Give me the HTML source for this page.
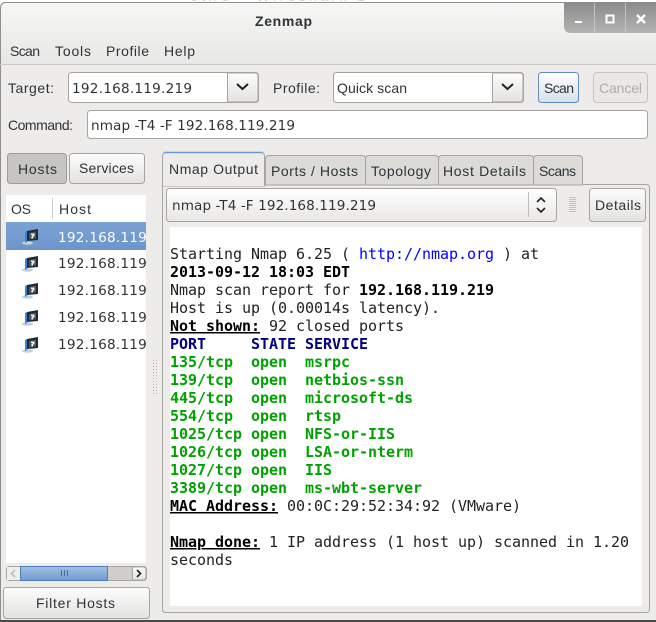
<!DOCTYPE html>
<html><head><meta charset="utf-8"><title>Zenmap</title>
<style>
html,body{margin:0;padding:0;background:#fff;width:656px;height:622px;overflow:hidden}
svg{display:block}
text{font-family:"Liberation Sans",sans-serif;font-size:14px;fill:#2e3436}
.d{font-family:"DejaVu Sans",sans-serif;font-size:13.6px}
.m{font-family:"DejaVu Sans Mono","Liberation Mono",monospace;font-size:15px;fill:#222;white-space:pre;letter-spacing:-0.03px}
.b{font-weight:bold;fill:#000}
.n{font-weight:bold;fill:#000080}
.g{font-weight:bold;fill:#00a200}
.u{text-decoration:underline}
.btn{fill:url(#bg);stroke:#a5a4a0}
.chev{fill:none;stroke:#222;stroke-width:2}
</style></head><body>
<svg xmlns="http://www.w3.org/2000/svg" width="656" height="622" viewBox="0 0 656 622">
<defs>
<linearGradient id="tb" x1="0" y1="0" x2="0" y2="1"><stop offset="0" stop-color="#f7f7f6"/><stop offset="1" stop-color="#e7e7e5"/></linearGradient>
<linearGradient id="bg" x1="0" y1="0" x2="0" y2="1"><stop offset="0" stop-color="#fdfdfd"/><stop offset="1" stop-color="#e3e2e0"/></linearGradient>
<linearGradient id="wb" x1="0" y1="0" x2="0" y2="1"><stop offset="0" stop-color="#8b8b8b"/><stop offset="1" stop-color="#b4b4b3"/></linearGradient>
<linearGradient id="sc" x1="0" y1="0" x2="0" y2="1"><stop offset="0" stop-color="#ffffff"/><stop offset="1" stop-color="#d5dfec"/></linearGradient>
<linearGradient id="th" x1="0" y1="0" x2="0" y2="1"><stop offset="0" stop-color="#a4c0e4"/><stop offset="1" stop-color="#6f9ad0"/></linearGradient>
<linearGradient id="sel" x1="0" y1="0" x2="0" y2="1"><stop offset="0" stop-color="#7ba2d4"/><stop offset="1" stop-color="#6c95ca"/></linearGradient>
<linearGradient id="cb" x1="0" y1="0" x2="0" y2="1"><stop offset="0" stop-color="#ffffff"/><stop offset="1" stop-color="#e8e7e5"/></linearGradient>
<g id="ico">
<ellipse cx="5.500" cy="14" rx="5.500" ry="1.800" fill="#c3d0de"/>
<path d="M3 3L5 2V13L3 14Z" fill="#3a86d6"/>
<path d="M5 2L16 0V11L5 12Z" fill="#1f2a36"/>
<path d="M7 4L14 2.500V9.500L7 10.500Z" fill="#4c565f"/>
<path d="M9 4.500h3.500v2.500l-1.500 1v1.500H9.500V7l1.500-1H9z" fill="#f2f2f2"/>
</g>
</defs>

<rect width="656" height="622" fill="#fff"/>
<text x="190" y="1" style="fill:#d5d5d5" textLength="175" lengthAdjust="spacing">ethO - Wireshark 2</text>
<path d="M0 622V8Q0 2 6 2H656V622Z" fill="#edecea"/>
<path d="M1 64V8Q1 3 6 3H656V64Z" fill="url(#tb)"/>
<path d="M.5 622V8Q.5 2.500 6 2.500H656" fill="none" stroke="#8e8e8c"/>
<rect x="0" y="64" width="656" height="1" fill="#c9c8c5"/>
<rect x="0" y="620" width="656" height="2" fill="#4a4a4a"/>

<!-- window buttons -->
<path d="M564 3H656V33H571Q564 33 564 26Z" fill="url(#wb)"/>
<rect x="594" y="3" width="1" height="30" fill="#c4c4c4"/>
<rect x="625" y="3" width="1" height="30" fill="#c4c4c4"/>
<rect x="575" y="21" width="7" height="2" fill="#fff"/>
<rect x="606.500" y="15.500" width="7" height="7" fill="none" stroke="#fff" stroke-width="2"/>
<path d="M637 15L645 23M645 15L637 23" stroke="#fff" stroke-width="2.400" fill="none"/>

<text x="255" y="26" style="font-weight:bold" textLength="57" lengthAdjust="spacing">Zenmap</text>

<text x="10" y="56" textLength="30" lengthAdjust="spacing">Scan</text>
<text x="55" y="56" textLength="36" lengthAdjust="spacing">Tools</text>
<text x="106" y="56" textLength="43" lengthAdjust="spacing">Profile</text>
<text x="164" y="56" textLength="31" lengthAdjust="spacing">Help</text>

<!-- target row -->
<text x="8" y="93" textLength="46" lengthAdjust="spacing">Target:</text>
<rect x="68.500" y="72.500" width="190" height="30" rx="3" fill="#fff" stroke="#a5a4a0"/>
<path d="M227.500 73H255Q258 73 258 76V99Q258 102 255 102H227.500Z" fill="url(#bg)" stroke="#a5a4a0"/>
<path class="chev" d="M237 84L242.500 89L248 84"/>
<text class="d" x="72" y="93" textLength="120" lengthAdjust="spacing">192.168.119.219</text>

<text x="273" y="93" textLength="47" lengthAdjust="spacing">Profile:</text>
<rect x="333.500" y="72.500" width="190" height="30" rx="3" fill="#fff" stroke="#a5a4a0"/>
<path d="M492.500 73H520Q523 73 523 76V99Q523 102 520 102H492.500Z" fill="url(#bg)" stroke="#a5a4a0"/>
<path class="chev" d="M502 84L507.500 89L513 84"/>
<text x="337" y="93" textLength="70" lengthAdjust="spacing">Quick scan</text>

<rect x="538.500" y="72.500" width="40" height="30" rx="3" fill="url(#sc)" stroke="#5f8dc4"/>
<text x="544" y="93" textLength="30" lengthAdjust="spacing">Scan</text>
<rect x="593.500" y="72.500" width="54" height="30" rx="3" fill="#e9e8e6" stroke="#c4c3c0"/>
<text x="599" y="93" style="fill:#adadab" textLength="43" lengthAdjust="spacing">Cancel</text>

<text x="8" y="130" textLength="65" lengthAdjust="spacing">Command:</text>
<rect x="87.500" y="110.500" width="560" height="28" rx="3" fill="#fff" stroke="#a5a4a0"/>
<text class="d" x="91" y="130" textLength="204" lengthAdjust="spacing">nmap -T4 -F 192.168.119.219</text>

<!-- hosts/services -->
<rect x="7.500" y="153.500" width="59" height="30" rx="3" fill="#c6c5c2" stroke="#9d9c98"/>
<text x="18" y="174" textLength="39" lengthAdjust="spacing">Hosts</text>
<rect x="69.500" y="153.500" width="75" height="30" rx="3" class="btn"/>
<text x="79" y="173" textLength="55" lengthAdjust="spacing">Services</text>

<!-- host list -->
<rect x="6" y="195" width="140" height="368" fill="#fff"/>
<text x="11" y="214" textLength="20" lengthAdjust="spacing">OS</text>
<rect x="52" y="198" width="1" height="21" fill="#d0cfcc"/>
<text x="59" y="214" textLength="32" lengthAdjust="spacing">Host</text>
<rect x="6" y="222" width="140" height="28" fill="url(#sel)"/>
<svg x="6" y="222" width="140" height="140" viewBox="0 0 140 140">
<use href="#ico" x="16" y="7"/>
<use href="#ico" x="16" y="34"/>
<use href="#ico" x="16" y="61"/>
<use href="#ico" x="16" y="88"/>
<use href="#ico" x="16" y="115"/>
<text class="d" x="52" y="20" style="fill:#fff" textLength="120" lengthAdjust="spacing">192.168.119.219</text>
<text class="d" x="52" y="46" textLength="120" lengthAdjust="spacing">192.168.119.219</text>
<text class="d" x="52" y="73" textLength="120" lengthAdjust="spacing">192.168.119.219</text>
<text class="d" x="52" y="100" textLength="120" lengthAdjust="spacing">192.168.119.219</text>
<text class="d" x="52" y="127" textLength="120" lengthAdjust="spacing">192.168.119.219</text>
</svg>

<!-- scrollbar -->
<rect x="6.500" y="566.500" width="140" height="14" rx="3" fill="#d0cfcc" stroke="#a5a4a0"/>
<path d="M7 567H20.500V580H7Z" fill="#efefed"/>
<path class="chev" style="stroke:#b8b8b5;stroke-width:1.500" d="M15 570L11.500 573.500L15 577"/>
<rect x="20.500" y="566.500" width="87" height="14" fill="url(#th)" stroke="#4f7fb8"/>
<path d="M61.500 570v6M64.500 570v6M67.500 570v6" stroke="#3f6ea8" fill="none"/>
<path d="M132.500 567H143Q146 567 146 570V577Q146 580 143 580H132.500Z" fill="url(#bg)" stroke="#a5a4a0"/>
<path class="chev" d="M137 570L140.500 573.500L137 577" style="stroke-width:1.600"/>

<rect x="3.500" y="587.500" width="146" height="31" rx="3" class="btn"/>
<text x="36" y="608" textLength="79" lengthAdjust="spacing">Filter Hosts</text>

<!-- paned grip -->
<path fill="#b9b8b5" d="M153 360h1v1h-1zM156 360h1v1h-1zM153 363h1v1h-1zM156 363h1v1h-1zM153 366h1v1h-1zM156 366h1v1h-1zM153 369h1v1h-1zM156 369h1v1h-1zM153 372h1v1h-1zM156 372h1v1h-1zM153 375h1v1h-1zM156 375h1v1h-1zM153 378h1v1h-1zM156 378h1v1h-1zM153 381h1v1h-1zM156 381h1v1h-1zM153 384h1v1h-1zM156 384h1v1h-1zM153 387h1v1h-1zM156 387h1v1h-1zM153 390h1v1h-1zM156 390h1v1h-1zM153 393h1v1h-1zM156 393h1v1h-1z"/>

<!-- notebook -->
<rect x="162.500" y="184.500" width="487" height="428" rx="3" fill="#edecea" stroke="#a5a4a0"/>
<g fill="#dcdbd8" stroke="#a5a4a0">
<path d="M265.500 185V159Q265.500 155.500 269 155.500H362Q365.500 155.500 365.500 159V185Z"/>
<path d="M365.500 185V159Q365.500 155.500 369 155.500H435Q438.500 155.500 438.500 159V185Z"/>
<path d="M438.500 185V159Q438.500 155.500 442 155.500H530Q533.500 155.500 533.500 159V185Z"/>
<path d="M533.500 185V159Q533.500 155.500 537 155.500H578Q582.500 155.500 582.500 159V185Z"/>
</g>
<path d="M162.500 186V156Q162.500 152.500 166 152.500H261Q264.500 152.500 264.500 156V186Z" fill="#edecea" stroke="#a5a4a0"/>
<path d="M164 152.500H263" stroke="#6a97cc" stroke-width="1.500"/>
<rect x="163" y="184" width="101" height="2" fill="#edecea"/>
<text x="169" y="174" textLength="89" lengthAdjust="spacing">Nmap Output</text>
<text x="271" y="176" textLength="87" lengthAdjust="spacing">Ports / Hosts</text>
<text x="371" y="176" textLength="60" lengthAdjust="spacing">Topology</text>
<text x="443" y="176" textLength="83" lengthAdjust="spacing">Host Details</text>
<text x="539" y="176" textLength="37" lengthAdjust="spacing">Scans</text>

<rect x="166.500" y="188.500" width="390" height="33" rx="3" fill="url(#cb)" stroke="#a5a4a0"/>
<rect x="528" y="192" width="1" height="25" fill="#bdbcb9"/>
<path class="chev" style="stroke-width:1.600" d="M537 202L541 198L545 202M537 208L541 212L545 208"/>
<text class="d" x="172" y="210" textLength="204" lengthAdjust="spacing">nmap -T4 -F 192.168.119.219</text>
<path d="M569 197.500h7M569 199.500h7M569 201.500h7M569 203.500h7M569 205.500h7M569 207.500h7M569 209.500h7M569 211.500h7" stroke="#c3c2bf" fill="none"/>
<rect x="589.500" y="188.500" width="56" height="33" rx="3" class="btn"/>
<text x="595" y="210" textLength="46" lengthAdjust="spacing">Details</text>

<rect x="170" y="227" width="472" height="379" fill="#fff"/>
<text class="m" x="170" y="259" xml:space="preserve">Starting Nmap 6.25 ( <tspan style="fill:#0000ff">http://nmap.org</tspan> ) at</text>
<text class="m b" x="170" y="277">2013-09-12 18:03 EDT</text>
<text class="m" x="170" y="295" xml:space="preserve">Nmap scan report for <tspan class="b">192.168.119.219</tspan></text>
<text class="m" x="170" y="313">Host is up (0.00014s latency).</text>
<text class="m" x="170" y="331" xml:space="preserve"><tspan class="b u">Not shown:</tspan> 92 closed ports</text>
<text class="m n" x="170" y="349" xml:space="preserve">PORT     STATE SERVICE</text>
<text class="m g" x="170" y="367" xml:space="preserve">135/tcp  open  msrpc</text>
<text class="m g" x="170" y="385" xml:space="preserve">139/tcp  open  netbios-ssn</text>
<text class="m g" x="170" y="403" xml:space="preserve">445/tcp  open  microsoft-ds</text>
<text class="m g" x="170" y="421" xml:space="preserve">554/tcp  open  rtsp</text>
<text class="m g" x="170" y="439" xml:space="preserve">1025/tcp open  NFS-or-IIS</text>
<text class="m g" x="170" y="457" xml:space="preserve">1026/tcp open  LSA-or-nterm</text>
<text class="m g" x="170" y="475" xml:space="preserve">1027/tcp open  IIS</text>
<text class="m g" x="170" y="493" xml:space="preserve">3389/tcp open  ms-wbt-server</text>
<text class="m" x="170" y="511" xml:space="preserve"><tspan class="b u">MAC Address:</tspan> 00:0C:29:52:34:92 (VMware)</text>
<text class="m" x="170" y="547" xml:space="preserve"><tspan class="b u">Nmap done:</tspan> 1 IP address (1 host up) scanned in 1.20</text>
<text class="m" x="170" y="565">seconds</text>
</svg>
</body></html>
